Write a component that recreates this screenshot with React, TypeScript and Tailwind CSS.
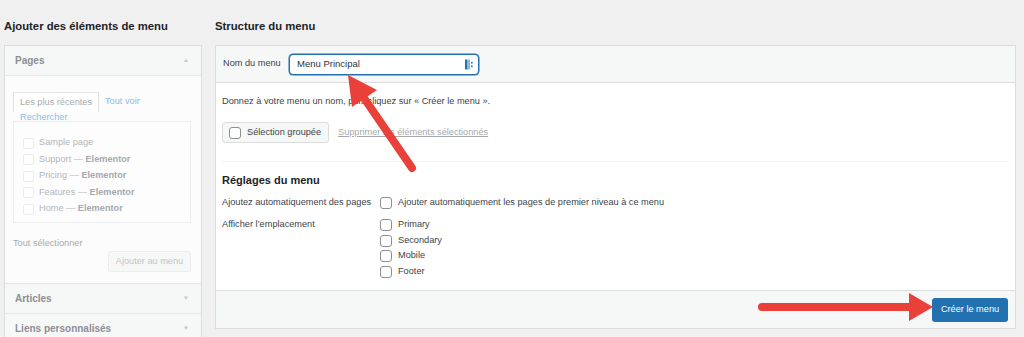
const pages = [
    { name: 'Sample page', builder: '' },
    { name: 'Support', builder: 'Elementor' },
    { name: 'Pricing', builder: 'Elementor' },
    { name: 'Features', builder: 'Elementor' },
    { name: 'Home', builder: 'Elementor' },
];

const locations = ['Primary', 'Secondary', 'Mobile', 'Footer'];

function Box({ faded = false }: { faded?: boolean }) {
    return (
        <span
            className={
                faded
                    ? 'inline-block w-[11px] h-[11px] rounded-[2px] border border-[#ececec] bg-white shrink-0'
                    : 'inline-block w-[12px] h-[12px] rounded-[3px] border border-[#8c8f94] bg-white shrink-0'
            }
        />
    );
}

function SectionHeader({ title, up = false }: { title: string; up?: boolean }) {
    return (
        <div className="h-[30px] flex items-center justify-between pl-[10px] pr-[12px] bg-[#f6f7f7] border-b border-[#e6e6e6]">
            <span className="text-[10px] font-bold text-[#8c8f94]">{title}</span>
            <span className="text-[6px] text-[#c3c4c7]">{up ? '▲' : '▼'}</span>
        </div>
    );
}

function Arrows() {
    return (
        <svg className="absolute inset-0 pointer-events-none" width="1024" height="337" viewBox="0 0 1024 337">
            <line x1="364" y1="98" x2="412" y2="168" stroke="#e9413a" strokeWidth="8" strokeLinecap="round" />
            <polygon points="348,75 377,90 352,107" fill="#e9413a" />
            <line x1="762" y1="307" x2="912" y2="307" stroke="#e9413a" strokeWidth="8" strokeLinecap="round" />
            <polygon points="909,293 933,307 909,321" fill="#e9413a" />
        </svg>
    );
}

export default function App() {
    return (
        <div className="relative w-full h-[337px] overflow-hidden bg-[#f0f0f1] font-['Liberation_Sans',Arial,sans-serif] text-[9.2px] text-[#3c434a] flex">
            {/* left column */}
            <div className="ml-[4px] w-[198px] shrink-0">
                <h2 className="pt-[19px] mb-[12px] leading-[14px] text-[11.3px] font-bold text-[#1d2327] whitespace-nowrap">
                    Ajouter des éléments de menu
                </h2>
                <div className="border border-[#dcdcde] bg-[#fcfcfc]">
                    <SectionHeader title="Pages" up />
                    <div className="pl-[8px] pr-[10px] pt-[16px] pb-[11px]">
                        <div className="flex items-center h-[20px]">
                            <span className="h-[20px] px-[6px] flex items-center border border-b-0 border-[#e4e4e4] bg-white text-[#a7aaad]">
                                Les plus récentes
                            </span>
                            <span className="ml-[6px] text-[#8fbbe6]">Tout voir</span>
                        </div>
                        <div className="pl-[7px] -mt-[1px] leading-[12px] text-[#8fbbe6]">Rechercher</div>
                        <div className="mt-[-2px] h-[102px] border border-[#ececec] bg-[#fdfdfd] pt-[13px] pl-[9px]">
                            {pages.map((p) => (
                                <div key={p.name} className="flex items-center gap-[5px] h-[16.5px] text-[#b4b6b9]">
                                    <Box faded />
                                    <span>
                                        {p.name}
                                        {p.builder && (
                                            <>
                                                {' — '}
                                                <span className="font-bold text-[#a7aaad]">{p.builder}</span>
                                            </>
                                        )}
                                    </span>
                                </div>
                            ))}
                        </div>
                        <div className="mt-[14px] leading-[12px] text-[#a7aaad]">Tout sélectionner</div>
                        <div className="flex justify-end mt-[2px]">
                            <span className="h-[21px] w-[83px] flex items-center justify-center rounded-[3px] border border-[#ededed] bg-[#f6f7f7] text-[#c3c4c7]">
                                Ajouter au menu
                            </span>
                        </div>
                    </div>
                    <div className="border-t border-[#e6e6e6]">
                        <SectionHeader title="Articles" />
                    </div>
                    <SectionHeader title="Liens personnalisés" />
                </div>
            </div>

            {/* right column */}
            <div className="ml-[13px] mr-[8px] flex-1 min-w-0">
                <h2 className="pt-[19px] mb-[12px] leading-[14px] text-[11.3px] font-bold text-[#1d2327]">Structure du menu</h2>
                <div className="border border-[#dcdcde] bg-white h-[284px] flex flex-col">
                    <div className="h-[37px] shrink-0 flex items-center pl-[7px] bg-[#f6f7f7] border-b border-[#dcdcde]">
                        <span className="w-[66px]">Nom du menu</span>
                        <div className="w-[190px] h-[21px] rounded-[4px] border border-[#2271b1] shadow-[0_0_0_0.5px_#2271b1] bg-white flex items-center justify-between pl-[7px] pr-[3px] text-[9.5px] text-[#2c3338]">
                            <span>Menu Principal</span>
                            <svg width="10" height="11" viewBox="0 0 10 11">
                                <rect x="0" y="0.5" width="2.5" height="10" fill="#2271b1" />
                                <rect x="3.5" y="0.5" width="1" height="10" fill="#2271b1" />
                                <rect x="6" y="3" width="1.6" height="1.6" fill="#2271b1" />
                                <rect x="6" y="6.5" width="1.6" height="1.6" fill="#2271b1" />
                            </svg>
                        </div>
                    </div>

                    <div className="flex-1 pl-[6px] pr-[7px]">
                        <p className="pt-[12px] leading-[13px]">Donnez à votre menu un nom, puis cliquez sur « Créer le menu ».</p>
                        <div className="mt-[14px] flex items-center gap-[9px]">
                            <span className="h-[21px] w-[107px] flex items-center gap-[6px] pl-[6px] rounded-[3px] border border-[#dcdcde] bg-[#f6f7f7]">
                                <Box />
                                <span>Sélection groupée</span>
                            </span>
                            <span className="underline text-[#a7aaad]">Supprimer les éléments sélectionnés</span>
                        </div>
                        <div className="mt-[18px] border-t border-[#f0f0f1]" />
                        <h3 className="mt-[11px] leading-[14px] text-[11px] font-bold text-[#1d2327]">Réglages du menu</h3>
                        <div className="mt-[9px] grid grid-cols-[158px_1fr] gap-y-[8px]">
                            <span className="leading-[13px]">Ajoutez automatiquement des pages</span>
                            <label className="flex items-center gap-[6px] leading-[13px]">
                                <Box />
                                <span>Ajouter automatiquement les pages de premier niveau à ce menu</span>
                            </label>
                            <span className="leading-[13px] mt-[1px]">Afficher l’emplacement</span>
                            <div className="flex flex-col">
                                {locations.map((l) => (
                                    <label key={l} className="flex items-center gap-[6px] h-[15.7px]">
                                        <Box />
                                        <span>{l}</span>
                                    </label>
                                ))}
                            </div>
                        </div>
                    </div>

                    <div className="h-[38px] shrink-0 flex items-center justify-end pr-[7px] bg-[#f6f7f7] border-t border-[#dcdcde]">
                        <span className="h-[24px] w-[76px] flex items-center justify-center rounded-[3px] bg-[#2271b1] text-white">
                            Créer le menu
                        </span>
                    </div>
                </div>
            </div>

            <Arrows />
        </div>
    );
}
